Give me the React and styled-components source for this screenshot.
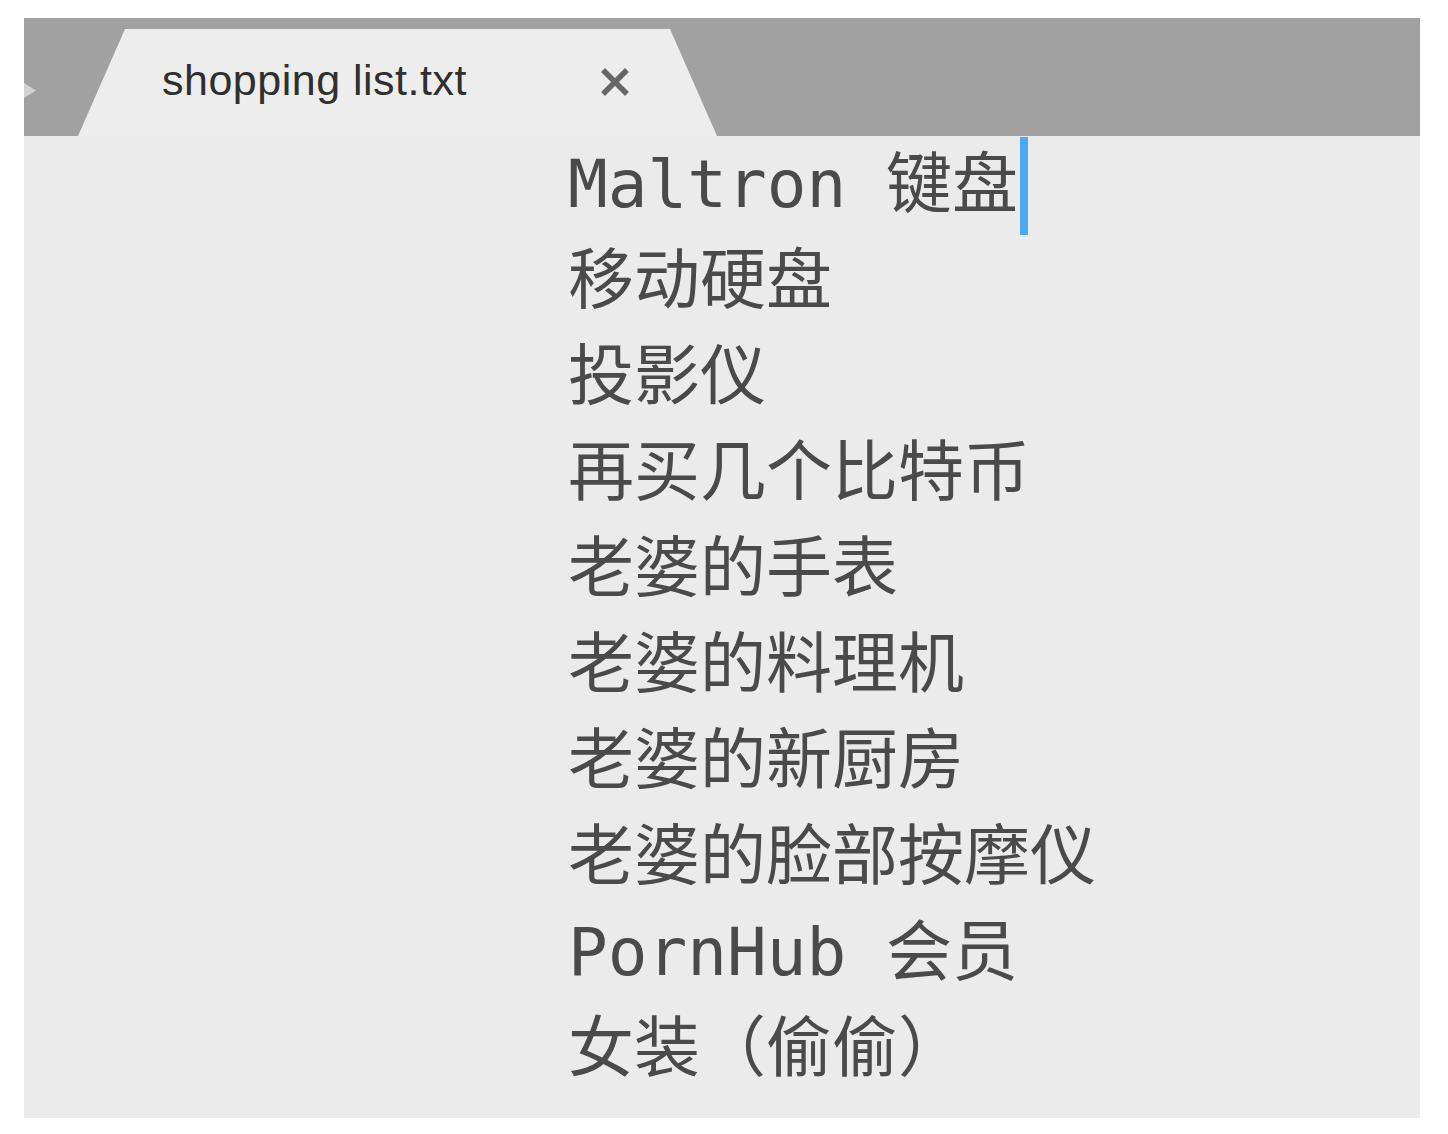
import styled, { createGlobalStyle } from 'styled-components';

const items = [
  'Maltron 键盘',
  '移动硬盘',
  '投影仪',
  '再买几个比特币',
  '老婆的手表',
  '老婆的料理机',
  '老婆的新厨房',
  '老婆的脸部按摩仪',
  'PornHub 会员',
  '女装（偷偷）',
];

const App = () => {
  return (
    <>
      <GlobalStyle />
      <Page>
        <Window>
          <TabBar>
            <ScrollArrow viewBox="0 0 14 16">
              <path d="M0 0 L13 8 L0 16 Z" fill="#d2d2d2" />
            </ScrollArrow>
            <Tab>
              <TabTitle>shopping list.txt</TabTitle>
              <CloseIcon viewBox="0 0 28 28">
                <path d="M4 4 L24 24 M24 4 L4 24" stroke="#666666" strokeWidth="5.5" strokeLinecap="square" />
              </CloseIcon>
            </Tab>
          </TabBar>
          <Editor>
            {items.map((text, i) => (
              <Line key={i}>
                {text}
                {i === 0 && <Cursor />}
              </Line>
            ))}
          </Editor>
        </Window>
      </Page>
    </>
  );
};

const GlobalStyle = createGlobalStyle`
  html, body {
    margin: 0;
    padding: 0;
    background: #ffffff;
  }
`;

const Page = styled.div`
  width: 1448px;
  height: 1134px;
  box-sizing: border-box;
  padding: 18px 28px 16px 24px;
`;

const Window = styled.div`
  width: 1396px;
  height: 1100px;
  display: flex;
  flex-direction: column;
  background: #ebebeb;
  overflow: hidden;
`;

const TabBar = styled.div`
  height: 118px;
  flex: none;
  background: #a1a1a1;
  display: flex;
  align-items: flex-end;
  position: relative;
`;

const ScrollArrow = styled.svg`
  position: absolute;
  left: 0;
  top: 65px;
  width: 13px;
  height: 15px;
`;

const Tab = styled.div`
  margin-left: 54px;
  width: 639px;
  height: 107px;
  box-sizing: border-box;
  padding-left: 84px;
  display: flex;
  align-items: center;
  background: #ededed;
  clip-path: polygon(47px 0, 592px 0, 639px 107px, 0 107px);
`;

const TabTitle = styled.span`
  font-family: "Liberation Sans", Arial, sans-serif;
  font-size: 43px;
  color: #2f2f2f;
  letter-spacing: 0.5px;
  margin-top: -4px;
`;

const CloseIcon = styled.svg`
  width: 28px;
  height: 28px;
  margin-left: 134px;
  margin-top: -1px;
`;

const Editor = styled.div`
  flex: 1;
  padding-top: 1px;
  padding-left: 544px;
  background: #ebebeb;
`;

const Line = styled.div`
  font-family: "DejaVu Sans Mono", "Noto Sans CJK SC", monospace;
  font-size: 66px;
  line-height: 96px;
  height: 96px;
  color: #4a4a4a;
  white-space: pre;
`;

const Cursor = styled.span`
  display: inline-block;
  width: 8px;
  height: 98px;
  margin-left: 2px;
  vertical-align: top;
  background: #4aa9f2;
`;

export default App;
